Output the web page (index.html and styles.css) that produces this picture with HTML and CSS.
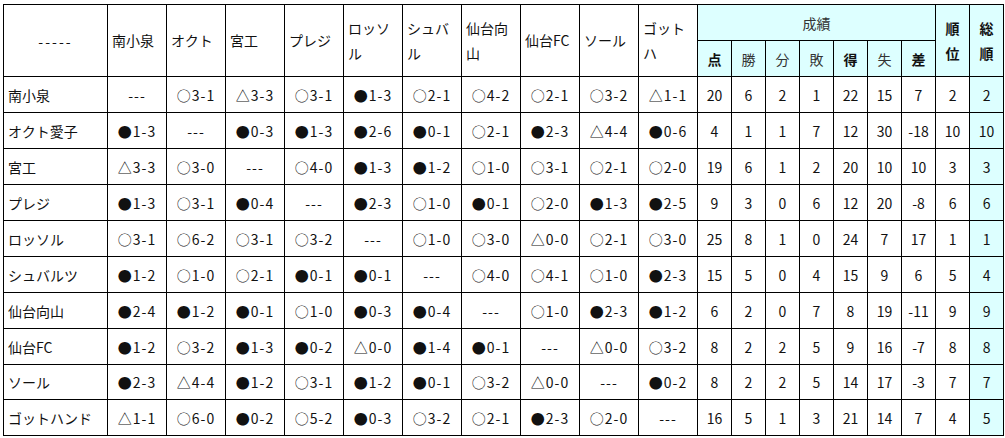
FILE: index.html
```html
<!DOCTYPE html>
<html lang="ja">
<head>
<meta charset="utf-8">
<title>成績表</title>
<link rel="stylesheet" href="styles.css">
</head>
<body>
<div class="sheet">
<table class="league">
  <colgroup>
    <col class="c-name">
    <col class="c-team"><col class="c-team"><col class="c-team"><col class="c-team"><col class="c-team">
    <col class="c-team"><col class="c-team"><col class="c-team"><col class="c-team"><col class="c-team">
    <col class="c-stat"><col class="c-stat"><col class="c-stat"><col class="c-stat"><col class="c-stat"><col class="c-stat"><col class="c-stat">
    <col class="c-stat"><col class="c-stat">
  </colgroup>
  <thead>
    <tr class="h1">
      <th rowspan="2" class="corner">-----</th>
      <th rowspan="2" class="team">南小泉</th>
      <th rowspan="2" class="team">オクト</th>
      <th rowspan="2" class="team">宮工</th>
      <th rowspan="2" class="team">プレジ</th>
      <th rowspan="2" class="team">ロッソル</th>
      <th rowspan="2" class="team">シュバル</th>
      <th rowspan="2" class="team">仙台向山</th>
      <th rowspan="2" class="team">仙台FC</th>
      <th rowspan="2" class="team">ソール</th>
      <th rowspan="2" class="team">ゴットハ</th>
      <th colspan="7" class="cy group">成績</th>
      <th rowspan="2" class="cy rank">順位</th>
      <th rowspan="2" class="cy rank">総順</th>
    </tr>
    <tr class="h2">
      <th class="cy sub b">点</th>
      <th class="cy sub">勝</th>
      <th class="cy sub">分</th>
      <th class="cy sub">敗</th>
      <th class="cy sub b">得</th>
      <th class="cy sub">失</th>
      <th class="cy sub b">差</th>
    </tr>
  </thead>
  <tbody>
    <tr><th class="name">南小泉</th><td>---</td><td>○3-1</td><td>△3-3</td><td>○3-1</td><td>●1-3</td><td>○2-1</td><td>○4-2</td><td>○2-1</td><td>○3-2</td><td>△1-1</td><td>20</td><td>6</td><td>2</td><td>1</td><td>22</td><td>15</td><td>7</td><td>2</td><td class="cy">2</td></tr>
    <tr><th class="name">オクト愛子</th><td>●1-3</td><td>---</td><td>●0-3</td><td>●1-3</td><td>●2-6</td><td>●0-1</td><td>○2-1</td><td>●2-3</td><td>△4-4</td><td>●0-6</td><td>4</td><td>1</td><td>1</td><td>7</td><td>12</td><td>30</td><td>-18</td><td>10</td><td class="cy">10</td></tr>
    <tr><th class="name">宮工</th><td>△3-3</td><td>○3-0</td><td>---</td><td>○4-0</td><td>●1-3</td><td>●1-2</td><td>○1-0</td><td>○3-1</td><td>○2-1</td><td>○2-0</td><td>19</td><td>6</td><td>1</td><td>2</td><td>20</td><td>10</td><td>10</td><td>3</td><td class="cy">3</td></tr>
    <tr><th class="name">プレジ</th><td>●1-3</td><td>○3-1</td><td>●0-4</td><td>---</td><td>●2-3</td><td>○1-0</td><td>●0-1</td><td>○2-0</td><td>●1-3</td><td>●2-5</td><td>9</td><td>3</td><td>0</td><td>6</td><td>12</td><td>20</td><td>-8</td><td>6</td><td class="cy">6</td></tr>
    <tr><th class="name">ロッソル</th><td>○3-1</td><td>○6-2</td><td>○3-1</td><td>○3-2</td><td>---</td><td>○1-0</td><td>○3-0</td><td>△0-0</td><td>○2-1</td><td>○3-0</td><td>25</td><td>8</td><td>1</td><td>0</td><td>24</td><td>7</td><td>17</td><td>1</td><td class="cy">1</td></tr>
    <tr><th class="name">シュバルツ</th><td>●1-2</td><td>○1-0</td><td>○2-1</td><td>●0-1</td><td>●0-1</td><td>---</td><td>○4-0</td><td>○4-1</td><td>○1-0</td><td>●2-3</td><td>15</td><td>5</td><td>0</td><td>4</td><td>15</td><td>9</td><td>6</td><td>5</td><td class="cy">4</td></tr>
    <tr><th class="name">仙台向山</th><td>●2-4</td><td>●1-2</td><td>●0-1</td><td>○1-0</td><td>●0-3</td><td>●0-4</td><td>---</td><td>○1-0</td><td>●2-3</td><td>●1-2</td><td>6</td><td>2</td><td>0</td><td>7</td><td>8</td><td>19</td><td>-11</td><td>9</td><td class="cy">9</td></tr>
    <tr><th class="name">仙台FC</th><td>●1-2</td><td>○3-2</td><td>●1-3</td><td>●0-2</td><td>△0-0</td><td>●1-4</td><td>●0-1</td><td>---</td><td>△0-0</td><td>○3-2</td><td>8</td><td>2</td><td>2</td><td>5</td><td>9</td><td>16</td><td>-7</td><td>8</td><td class="cy">8</td></tr>
    <tr class="short"><th class="name">ソール</th><td>●2-3</td><td>△4-4</td><td>●1-2</td><td>○3-1</td><td>●1-2</td><td>●0-1</td><td>○3-2</td><td>△0-0</td><td>---</td><td>●0-2</td><td>8</td><td>2</td><td>2</td><td>5</td><td>14</td><td>17</td><td>-3</td><td>7</td><td class="cy">7</td></tr>
    <tr><th class="name">ゴットハンド</th><td>△1-1</td><td>○6-0</td><td>●0-2</td><td>○5-2</td><td>●0-3</td><td>○3-2</td><td>○2-1</td><td>●2-3</td><td>○2-0</td><td>---</td><td>16</td><td>5</td><td>1</td><td>3</td><td>21</td><td>14</td><td>7</td><td>4</td><td class="cy">5</td></tr>
  </tbody>
</table>
</div>
</body>
</html>
```

FILE: styles.css
```css
html, body {
  margin: 0;
  padding: 0;
  background: #ffffff;
}

.sheet {
  padding: 4px 0 0 3px;
}

.league {
  border-collapse: collapse;
  table-layout: fixed;
  width: 1001px;
  font-family: "Noto Sans CJK JP", "Noto Sans", sans-serif;
  font-size: 14px;
  color: #111;
}

.c-name { width: 104px; }
.c-team { width: 59px; }
.c-stat { width: 34px; }

.league th,
.league td {
  border: 1px solid #000;
  padding: 0;
  text-align: center;
  vertical-align: middle;
  font-weight: normal;
  white-space: normal;
  overflow: hidden;
}

.league tbody td:nth-child(-n+11) {
  letter-spacing: 1px;
}

.league tr.h1 { height: 36px; }
.league tr.h2 { height: 36px; }
.league tbody tr { height: 36px; }
.league tbody tr.short { height: 35px; }

.league th.team {
  text-align: left;
  padding: 0 2px 0 4px;
  line-height: 25px;
  word-break: break-all;
}

.league th.name {
  text-align: left;
  padding: 0 4px;
  white-space: nowrap;
}

.league th.corner {
  letter-spacing: 2px;
}

.cy {
  background: #ddffff;
}

.league th.group {
  color: #333;
}

.league th.sub {
  color: #333;
}

.league th.b {
  font-weight: bold;
  color: #111;
}

.league th.rank {
  font-weight: bold;
  line-height: 25px;
  padding: 0 3px;
  color: #111;
}
```
